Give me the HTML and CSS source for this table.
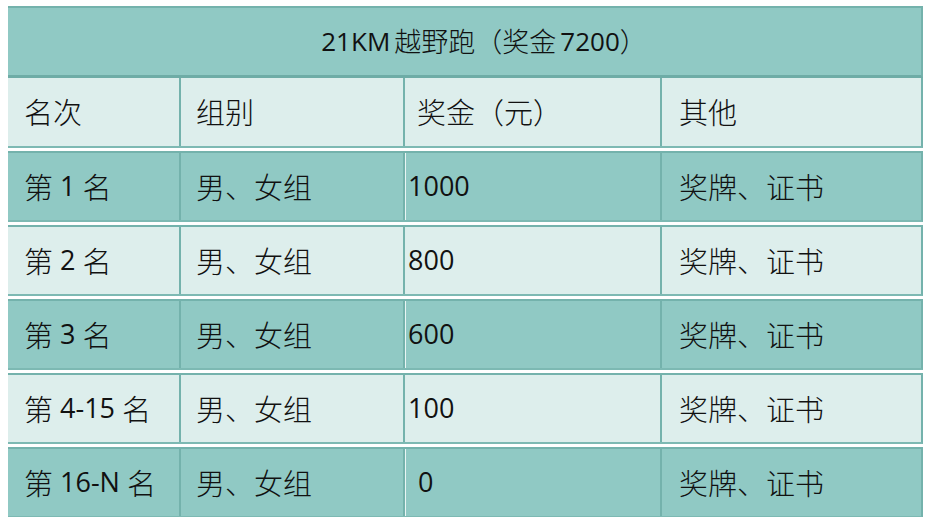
FILE: index.html
```html
<!DOCTYPE html>
<html lang="zh">
<head>
<meta charset="utf-8">
<link rel="stylesheet" href="styles.css">
</head>
<body>
<div class="table">
  <div class="title"><span class="n">21KM</span><span class="gap"></span>越野跑（奖金<span class="gap"></span><span class="n">7200</span>）</div>
  <div class="row head light">
    <div class="cell c1">名次</div>
    <div class="cell c2">组别</div>
    <div class="cell c3 headprize">奖金（元）</div>
    <div class="cell c4">其他</div>
  </div>
  <div class="row dark">
    <div class="cell c1">第<span class="n sp">1</span>名</div>
    <div class="cell c2">男、女组</div>
    <div class="cell c3 num">1000</div>
    <div class="cell c4">奖牌、证书</div>
  </div>
  <div class="row light">
    <div class="cell c1">第<span class="n sp">2</span>名</div>
    <div class="cell c2">男、女组</div>
    <div class="cell c3 num">800</div>
    <div class="cell c4">奖牌、证书</div>
  </div>
  <div class="row dark">
    <div class="cell c1">第<span class="n sp">3</span>名</div>
    <div class="cell c2">男、女组</div>
    <div class="cell c3 num">600</div>
    <div class="cell c4">奖牌、证书</div>
  </div>
  <div class="row light">
    <div class="cell c1">第<span class="n sp">4-15</span>名</div>
    <div class="cell c2">男、女组</div>
    <div class="cell c3 num">100</div>
    <div class="cell c4">奖牌、证书</div>
  </div>
  <div class="row dark last">
    <div class="cell c1">第<span class="n sp">16-N</span>名</div>
    <div class="cell c2">男、女组</div>
    <div class="cell c3 num zero">0</div>
    <div class="cell c4">奖牌、证书</div>
  </div>
</div>
</body>
</html>
```
FILE: styles.css
```css
html, body {
  margin: 0;
  padding: 0;
  background: #ffffff;
}
body {
  padding: 6px 0 0 8px;
  font-family: "Noto Sans CJK SC", sans-serif;
  color: #111;
}
.table {
  width: 915px;
  display: flex;
  flex-direction: column;
}
.title {
  border-top: 2px solid #74b2ac;
  border-bottom: 3px solid #6eaca6;
  border-right: 2px solid #74b2ac;
  background: #90c9c4;
  display: flex;
  align-items: center;
  justify-content: center;
  font-size: 27px;
  font-weight: 300;
  padding-left: 39px;
  padding-bottom: 2px;
  box-sizing: border-box;
  height: 72px;
}
.title .n {
  font-size: 26px;
}
.gap {
  display: inline-block;
  width: 4px;
}
.row {
  display: grid;
  grid-template-columns: 171px 224px 257px 261px;
  height: 67px;
  border-top: 2px solid #74b2ac;
  border-bottom: 2px solid #7db9b3;
  margin-bottom: 3px;
  border-right: 2px solid #74b2ac;
}
.row.head {
  border-top: none;
  height: 68px;
}
.row.last {
  margin-bottom: 0;
}
.row.dark {
  background: #90c9c4;
}
.row.light {
  background: #ddeeec;
}
.cell {
  display: flex;
  align-items: center;
  font-size: 29px;
  font-family: "Noto Sans CJK SC", sans-serif;
  font-weight: 300;
  padding-bottom: 2px;
}
.n {
  font-family: "Open Sans", sans-serif;
  font-weight: 400;
  font-size: 27px;
}
.n.sp {
  margin: 0 7px 0 7px;
}
.cell.c1 {
  padding-left: 16px;
}
.cell.c2, .cell.c3, .cell.c4 {
  border-left: 2px solid #74b2ac;
}
.cell.c2 {
  padding-left: 15px;
}
.cell.c3 {
  padding-left: 3px;
}
.row.dark .cell.c3 {
  box-shadow: inset 1px 0 0 #e9f5f4;
}
.cell.headprize {
  padding-left: 12px;
}
.cell.num {
  font-family: "Open Sans", sans-serif;
  font-size: 27px;
  font-weight: 400;
}
.cell.zero {
  padding-left: 13px;
}
.cell.c4 {
  padding-left: 17px;
}
```
